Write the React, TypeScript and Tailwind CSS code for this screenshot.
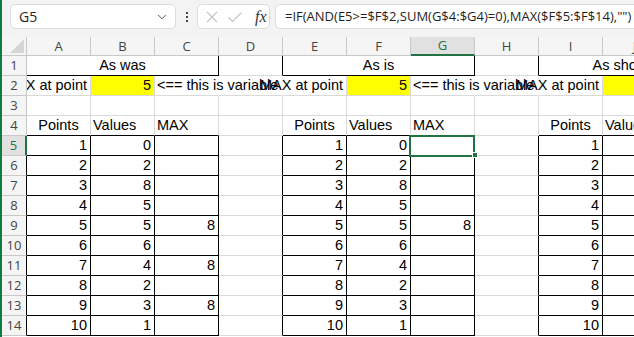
import { ChevronDown } from 'lucide-react';

type Cell = {
  t?: string;
  a?: 'l' | 'c' | 'r';
  y?: boolean;
  span?: number;
  r?: 'k' | 'g' | 'n';
  b?: 'k' | 'g';
  clip?: boolean;
};

const cols = ['A', 'B', 'C', 'D', 'E', 'F', 'G', 'H', 'I', 'J'];

const rightCls = { k: 'border-r-black', g: 'border-r-[#dadada]', n: 'border-r-transparent' };
const bottomCls = { k: 'border-b-black', g: 'border-b-[#dadada]' };
const alignCls = { l: 'justify-start pl-[2px]', c: 'justify-center', r: 'justify-end pr-[3px]' };
const widthCls: Record<number, string> = { 1: 'w-[64px]', 3: 'w-[192px]' };

const values = [0, 2, 8, 5, 5, 6, 4, 2, 3, 1];
// keyed by index into values (point 5 -> index 4)
const maxWas: Record<number, string> = { 4: '8', 6: '8', 8: '8' };
const maxIs: Record<number, string> = { 4: '8' };

function buildRows(): Cell[][] {
  const rows: Cell[][] = [];
  rows.push([
    { t: 'As was', a: 'c', span: 3, r: 'k', b: 'k' },
    { r: 'k', b: 'g' },
    { t: 'As is', a: 'c', span: 3, r: 'k', b: 'k' },
    { r: 'k', b: 'g' },
    { t: 'As should be', a: 'c', span: 3, r: 'k', b: 'k' },
  ]);
  rows.push([
    { t: 'MAX at point', a: 'r', clip: true, r: 'g', b: 'g' },
    { t: '5', a: 'r', y: true, r: 'g', b: 'g' },
    { t: '<== this is variable', a: 'l', r: 'n', b: 'g' },
    { r: 'n', b: 'g' },
    { t: 'MAX at point', a: 'r', r: 'g', b: 'g' },
    { t: '5', a: 'r', y: true, r: 'g', b: 'g' },
    { t: '<== this is variable', a: 'l', r: 'n', b: 'g' },
    { r: 'n', b: 'g' },
    { t: 'MAX at point', a: 'r', r: 'g', b: 'g' },
    { t: '5', a: 'r', y: true, r: 'g', b: 'g' },
  ]);
  rows.push(cols.map(() => ({ r: 'g', b: 'g' } as Cell)));
  rows.push([
    { t: 'Points', a: 'c', r: 'g', b: 'k' },
    { t: 'Values', a: 'l', r: 'g', b: 'k' },
    { t: 'MAX', a: 'l', r: 'g', b: 'k' },
    { r: 'g', b: 'g' },
    { t: 'Points', a: 'c', r: 'g', b: 'k' },
    { t: 'Values', a: 'l', r: 'g', b: 'k' },
    { t: 'MAX', a: 'l', r: 'g', b: 'k' },
    { r: 'g', b: 'g' },
    { t: 'Points', a: 'c', r: 'g', b: 'k' },
    { t: 'Values', a: 'l', r: 'g', b: 'k' },
  ]);
  values.forEach((v, i) => {
    const p = String(i + 1);
    rows.push([
      { t: p, a: 'r', r: 'k', b: 'k' },
      { t: String(v), a: 'r', r: 'k', b: 'k' },
      { t: maxWas[i], a: 'r', r: 'k', b: 'k' },
      { r: 'k', b: 'g' },
      { t: p, a: 'r', r: 'k', b: 'k' },
      { t: String(v), a: 'r', r: 'k', b: 'k' },
      { t: maxIs[i], a: 'r', r: 'k', b: 'k' },
      { r: 'k', b: 'g' },
      { t: p, a: 'r', r: 'k', b: 'k' },
      { r: 'k', b: 'k' },
    ]);
  });
  return rows;
}

function FormulaBar() {
  return (
    <div className="h-[37px] bg-[#f3f3f3] flex items-start pt-[4px] pl-[8px] gap-0">
      <div className="w-[166px] h-[25px] bg-white border border-[#dcdcdc] rounded-[5px] flex items-center pl-[8px] pr-[6px] justify-between">
        <span className="text-[14px] text-[#1f1f1f] font-['Open_Sans',sans-serif]">G5</span>
        <ChevronDown size={14} strokeWidth={1.6} className="text-[#444]" />
      </div>
      <div className="w-[21px] h-[25px] flex flex-col items-center justify-center gap-[2px]">
        <div className="w-[2px] h-[2px] bg-[#444]" />
        <div className="w-[2px] h-[2px] bg-[#444]" />
        <div className="w-[2px] h-[2px] bg-[#444]" />
      </div>
      <div className="w-[73px] h-[25px] bg-white border border-[#dcdcdc] rounded-[5px] flex items-center pl-[7px] gap-[8px]">
        <svg width="14" height="14" viewBox="0 0 14 14" className="shrink-0">
          <path d="M2 2 L12 12 M12 2 L2 12" stroke="#c4c4c4" strokeWidth="1.2" fill="none" />
        </svg>
        <svg width="16" height="14" viewBox="0 0 16 14" className="shrink-0">
          <path d="M1.5 7.5 L5.5 11.5 L14.5 2.5" stroke="#c4c4c4" strokeWidth="1.2" fill="none" />
        </svg>
        <span className="italic text-[16px] leading-none text-[#333] font-['Liberation_Serif',serif] ml-[4px]">fx</span>
      </div>
      <div className="ml-[5px] flex-1 h-[25px] bg-white border border-[#dcdcdc] border-r-0 rounded-l-[5px] flex items-center pl-[9px] overflow-hidden">
        <span className="whitespace-nowrap text-[13px] text-[#1f1f1f] font-['Open_Sans',sans-serif]">
          =IF(AND(E5&gt;=$F$2,SUM(G$4:$G4)=0),MAX($F$5:$F$14),"")
        </span>
      </div>
    </div>
  );
}

export default function App() {
  const rows = buildRows();
  return (
    <div className="relative w-[634px] h-[337px] overflow-hidden bg-white border-l-2 border-l-[#107c41] font-['Liberation_Sans',sans-serif]">
      <FormulaBar />

      {/* column headers */}
      <div className="flex h-[19px] bg-[#f5f5f5] font-['Open_Sans',sans-serif] text-[13px] text-[#444]">
        <div className="w-[25px] shrink-0 border-r border-b border-[#c8c8c8] relative">
          <svg width="14" height="14" viewBox="0 0 14 14" className="absolute right-[2px] bottom-[2px]">
            <path d="M14 0 L14 14 L0 14 Z" fill="#d6d6d6" />
          </svg>
        </div>
        {cols.map((c) =>
          c === 'G' ? (
            <div key={c} className="w-[64px] shrink-0 border-r border-r-[#c8c8c8] border-b-2 border-b-[#217346] bg-[#e1e1e1] text-[#217346] flex items-center justify-center leading-none">
              {c}
            </div>
          ) : (
            <div key={c} className="w-[64px] shrink-0 border-r border-b border-[#c8c8c8] flex items-center justify-center leading-none">
              {c}
            </div>
          )
        )}
      </div>

      {rows.map((row, ri) => (
        <div key={ri} className="flex h-[20px]">
          {ri === 4 ? (
            <div className="w-[25px] shrink-0 border-r-2 border-r-[#217346] border-b border-b-[#c8c8c8] bg-[#e1e1e1] text-[#217346] flex items-center justify-center text-[13px] font-['Open_Sans',sans-serif]">
              {ri + 1}
            </div>
          ) : (
            <div className={`w-[25px] shrink-0 border-r border-b border-b-[#c8c8c8] bg-[#f5f5f5] text-[#444] flex items-center justify-center text-[13px] font-['Open_Sans',sans-serif] ${ri >= 4 ? 'border-r-black' : 'border-r-[#c8c8c8]'}`}>
              {ri + 1}
            </div>
          )}
          {row.map((cell, ci) => (
            <div
              key={ci}
              className={`${widthCls[cell.span ?? 1]} shrink-0 border-r border-b flex items-end pb-[1px] whitespace-nowrap text-[14.5px] leading-[17px] text-black ${rightCls[cell.r ?? 'g']} ${bottomCls[cell.b ?? 'g']} ${alignCls[cell.a ?? 'l']} ${cell.y ? 'bg-[#ffff00]' : ''} ${cell.clip ? 'overflow-hidden' : ''}`}
            >
              {cell.t}
            </div>
          ))}
        </div>
      ))}

      {/* active cell G5 */}
      <div className="absolute left-[407px] top-[135px] w-[66px] h-[22px] border-2 border-[#217346] pointer-events-none" />
      <div className="absolute left-[470px] top-[152px] w-[6px] h-[6px] bg-[#217346] border border-white" />
    </div>
  );
}
